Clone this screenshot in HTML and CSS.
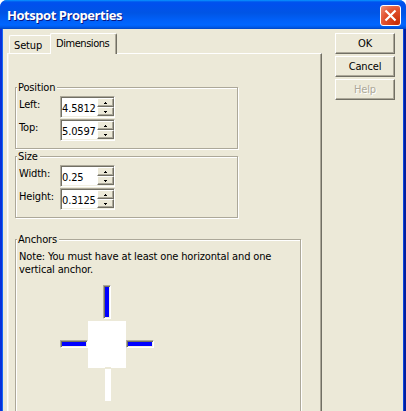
FILE: index.html
```html
<!DOCTYPE html>
<html lang="en">
<head>
<meta charset="utf-8">
<title>Hotspot Properties</title>
<link rel="stylesheet" href="styles.css">
</head>
<body>
<div class="window">
  <header class="titlebar">
    <h1>Hotspot Properties</h1>
    <button class="close" aria-label="Close"><svg width="13" height="13" viewBox="0 0 13 13"><path d="M1.5 1.5l10 10M11.5 1.5l-10 10" stroke="#fff" stroke-width="2.2"/></svg></button>
  </header>
  <main class="content">
    <section class="tabbed">
      <nav class="tabs">
        <div class="tab">Setup</div>
        <div class="tab active">Dimensions</div>
      </nav>
      <div class="panel">
        <section class="group small">
          <h2>Position</h2>
          <div class="row"><label>Left:</label><div class="spin"><span class="value">4.5812</span><div class="steps"><button class="up"></button><button class="down"></button></div></div></div>
          <div class="row"><label>Top:</label><div class="spin"><span class="value">5.0597</span><div class="steps"><button class="up"></button><button class="down"></button></div></div></div>
        </section>
        <section class="group small">
          <h2>Size</h2>
          <div class="row"><label>Width:</label><div class="spin"><span class="value">0.25</span><div class="steps"><button class="up"></button><button class="down"></button></div></div></div>
          <div class="row"><label>Height:</label><div class="spin"><span class="value">0.3125</span><div class="steps"><button class="up"></button><button class="down"></button></div></div></div>
        </section>
        <section class="group anchors">
          <h2>Anchors</h2>
          <p>Note: You must have at least one horizontal and one<br>vertical anchor.</p>
          <div class="diagram">
            <div class="bar top"></div>
            <div class="bar left"></div>
            <div class="object"></div>
            <div class="bar right"></div>
            <div class="bottom"></div>
          </div>
        </section>
      </div>
    </section>
    <aside class="actions">
      <button class="btn">OK</button>
      <button class="btn">Cancel</button>
      <button class="btn disabled" disabled>Help</button>
    </aside>
  </main>
</div>
</body>
</html>
```
FILE: styles.css
```css
* { box-sizing: border-box; }
body { margin: 0; background: #fff; overflow: hidden; font: 11px/13px "DejaVu Sans Condensed", "DejaVu Sans", sans-serif; font-stretch: condensed; letter-spacing: -0.15px; color: #000; }
h1, h2, p { margin: 0; font-weight: normal; font-size: 11px; }
button { padding: 0; border: 0; font: inherit; letter-spacing: inherit; }
.window { width: 406px; height: 411px; display: flex; flex-direction: column; overflow: hidden; border-radius: 7px 7px 0 0; background: #0a4be0; }
.titlebar { height: 29px; flex: none; display: flex; align-items: flex-start; justify-content: space-between; padding: 5px 5px 0 7px; background: linear-gradient(#0997ff 0, #0053ee 2px, #0050ee 4px, #0055e5 13px, #0060f8 20px, #0066ff 25px, #005bea 27px, #0046c5 29px); }
.titlebar h1 { color: #fff; font: bold 13px/20px "Open Sans", "Noto Sans", sans-serif; letter-spacing: -0.45px; text-shadow: 1px 1px #0a1883; white-space: nowrap; }
.close { width: 21px; height: 21px; border: 1px solid #fff; border-radius: 3px; display: grid; place-items: center; background: radial-gradient(circle at 85% 90%, #c72d05, #e35330 60%, #ee947c); }
.content { flex: 1; min-height: 0; display: flex; justify-content: space-between; margin: 0 3px; padding: 4px 8px 0 4px; background: #ece9d8; box-shadow: -1px 0 #1666f5, -3px 0 #0831d9, 1px 0 #0b45dd, 3px 0 #001ea0; }
.tabbed { width: 315px; display: flex; flex-direction: column; }
.tabs { display: flex; height: 21px; align-items: flex-end; padding-left: 2px; flex: none; position: relative; z-index: 1; }
.tab { width: 41px; height: 19px; padding: 3px 0 0 4px; border: 1px solid #fff; border-bottom: 0; border-right: 0; border-radius: 2px 0 0 0; white-space: nowrap; }
.tab.active { width: 67px; height: 21px; padding: 3px 0 0 5px; letter-spacing: -0.45px; border-right: 1px solid #716f64; box-shadow: inset -1px 0 #aca899; border-radius: 2px 2px 0 0; background: #ece9d8; }
.panel { flex: 1; margin-top: -1px; padding: 33px 0 0 7px; border-top: 1px solid #fff; border-left: 1px solid #fff; border-right: 1px solid #716f64; box-shadow: inset -1px 0 #aca899, inset 1px 0 #f5f3e8; }
.group { border: 1px solid #aca899; box-shadow: 1px 1px #fff, inset 1px 1px #fff; }
.small { width: 223px; height: 62px; margin-bottom: 7px; }
.group h2 { width: max-content; height: 13px; line-height: 13px; margin: -7px 0 0 1px; padding: 0 2px 0 1px; background: #ece9d8; white-space: nowrap; }
.row { display: flex; height: 23px; padding-left: 3px; }
.small .row:nth-child(2) { margin-top: 2px; }
.row label { width: 41px; padding-top: 2px; white-space: nowrap; }
.spin { width: 55px; height: 22px; display: flex; border: 1px solid; border-color: #aca899 #fff #fff #aca899; box-shadow: inset 1px 1px #716f64, inset -1px -1px #f1efe2; background: #fff; padding: 1px 0 1px 1px; }
.value { width: 35px; padding-top: 4px; white-space: nowrap; }
.steps { width: 17px; display: grid; grid-template-rows: 9px 9px; }
.steps button { background: #ece9d8; border: 1px solid; border-color: #fff #716f64 #716f64 #fff; box-shadow: inset -1px -1px #aca899; display: grid; place-items: center; }
.steps button::after { content: ""; width: 3px; height: 2px; background: linear-gradient(#000, #000) 0 100% / 3px 1px no-repeat, linear-gradient(#000, #000) 1px 0 / 1px 1px no-repeat; }
.steps .down::after { transform: rotate(180deg); }
.anchors { width: 286px; height: 180px; margin-top: 21px; }
.anchors p { margin: 4px 0 0 3px; white-space: nowrap; }
.diagram { display: grid; grid-template-columns: 28px 38px 28px; grid-template-rows: 36px 47px 33px; width: 94px; margin: 9px 0 0 44px; }
.bar { background: #00f; border: 1px solid; border-color: #aca899 #fff #fff #aca899; box-shadow: inset 1px 1px #716f64, inset -1px -1px #f1efe2; }
.top { grid-area: 1 / 2; width: 8px; height: 34px; margin-left: 15px; }
.left { grid-area: 2 / 1; height: 8px; margin-top: 19px; }
.object { grid-area: 2 / 2; background: linear-gradient(#ece9d8, #ece9d8) 17px 100% / 6px 1px no-repeat #fff; }
.right { grid-area: 2 / 3; height: 8px; margin-top: 19px; }
.bottom { grid-area: 3 / 2; width: 6px; height: 32px; margin: 1px 0 0 17px; background: #fff; }
.actions { width: 60px; display: flex; flex-direction: column; gap: 2px; }
.btn { height: 21px; background: #ece9d8; color: #000; border: 1px solid; border-color: #fff #716f64 #716f64 #fff; box-shadow: inset -1px -1px #aca899; }
.disabled { color: #aca899; text-shadow: 1px 1px #fff; }
```
